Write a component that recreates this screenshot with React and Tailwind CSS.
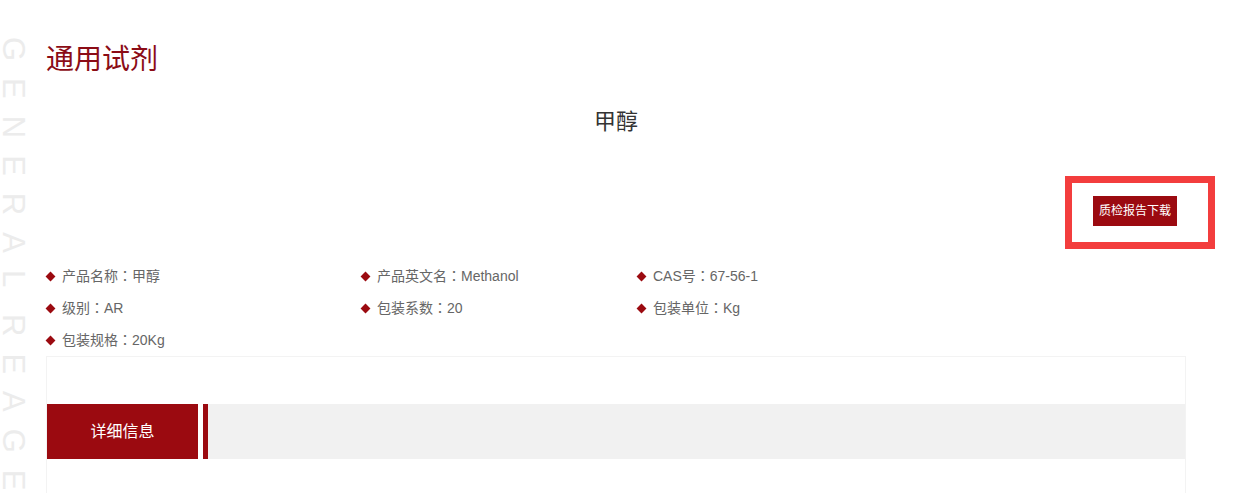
import React from "react";

const specs = [
  ["产品名称", "甲醇"],
  ["产品英文名", "Methanol"],
  ["CAS号", "67-56-1"],
  ["级别", "AR"],
  ["包装系数", "20"],
  ["包装单位", "Kg"],
  ["包装规格", "20Kg"],
];

const SpecItem = ({ label, value }) => (
  <div className="flex items-center h-[32px] text-[14px] text-[#666]">
    <span className="w-[7px] h-[7px] bg-[#9b0a10] rotate-45 ml-[47px] mr-[8px] shrink-0" />
    <span>
      {label}
      <span style={{ fontFamily: '"Noto Sans CJK TC", sans-serif' }}>：</span>
      {value}
    </span>
  </div>
);

export default function App() {
  return (
    <div
      className="relative w-full h-[493px] overflow-hidden bg-white"
      style={{ fontFamily: '"Liberation Sans", Arial, "Noto Sans CJK SC", sans-serif' }}
    >
      <div className="absolute left-[-2px] top-[37px] flex gap-[10px] [writing-mode:vertical-rl] text-[31px] leading-[30px] tracking-[17px] text-[#ececec] whitespace-nowrap select-none">
        <span>GENERAL</span>
        <span>REAGENT</span>
      </div>

      <div className="relative w-[1186px]">
        <h1 className="pl-[46px] pt-[40px] text-[28px] leading-[40px] text-[#8b0c16] font-normal">
          通用试剂
        </h1>

        <h2 className="mt-[27px] text-center pl-[46px] text-[22px] leading-[30px] text-[#333] font-normal">
          甲醇
        </h2>

        <div className="flex justify-end mt-[59px] pr-[9px]">
          <div className="relative">
            <span className="absolute -left-[28px] -right-[38px] -top-[20px] -bottom-[23px] border-[7px] border-[#f33d3d] pointer-events-none" />
            <button className="h-[30px] px-[6px] bg-[#9b0a10] text-white text-[12px] leading-[30px]">
              质检报告下载
            </button>
          </div>
        </div>

        <div className="mt-[34px] grid grid-cols-[315px_276px_1fr]">
          {specs.map(([l, v]) => (
            <SpecItem key={l} label={l} value={v} />
          ))}
        </div>

        <div className="ml-[46px] border border-[#f3f3f3] h-[200px]">
          <div className="mt-[47px] flex h-[55px] bg-[#f1f1f1]">
            <div className="w-[151px] bg-[#9b0a10] text-white text-[16px] flex items-center justify-center">
              详细信息
            </div>
            <div className="w-[5px] bg-white" />
            <div className="w-[5px] bg-[#9b0a10]" />
          </div>
        </div>
      </div>
    </div>
  );
}
